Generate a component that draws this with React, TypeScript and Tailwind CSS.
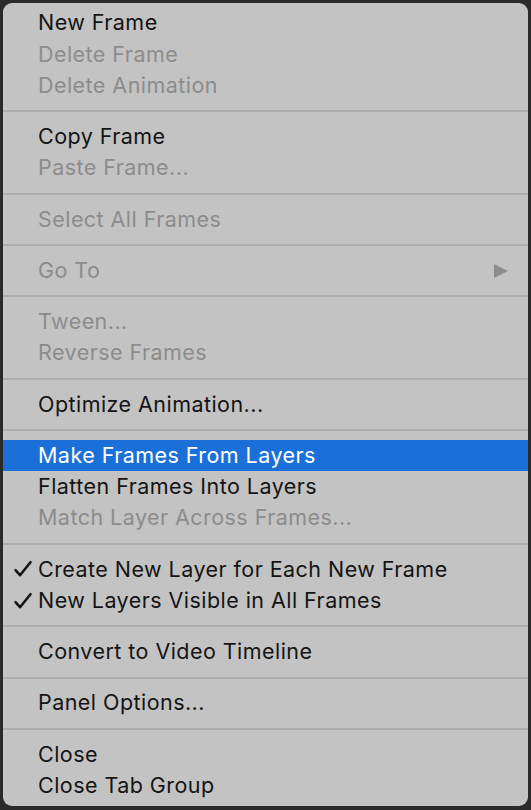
import React from "react";

type Item = { label: string; disabled?: boolean; checked?: boolean; highlighted?: boolean; submenu?: boolean };

const groups: Item[][] = [
  [{ label: "New Frame" }, { label: "Delete Frame", disabled: true }, { label: "Delete Animation", disabled: true }],
  [{ label: "Copy Frame" }, { label: "Paste Frame...", disabled: true }],
  [{ label: "Select All Frames", disabled: true }],
  [{ label: "Go To", disabled: true, submenu: true }],
  [{ label: "Tween...", disabled: true }, { label: "Reverse Frames", disabled: true }],
  [{ label: "Optimize Animation..." }],
  [
    { label: "Make Frames From Layers", highlighted: true },
    { label: "Flatten Frames Into Layers" },
    { label: "Match Layer Across Frames...", disabled: true },
  ],
  [
    { label: "Create New Layer for Each New Frame", checked: true },
    { label: "New Layers Visible in All Frames", checked: true },
  ],
  [{ label: "Convert to Video Timeline" }],
  [{ label: "Panel Options..." }],
  [{ label: "Close" }, { label: "Close Tab Group" }],
];

function Row({ item }: { item: Item }) {
  const color = item.highlighted ? "text-white" : item.disabled ? "text-[#8c8c8c]" : "text-[#141414]";
  return (
    <div
      className={`relative flex h-[31.25px] items-center pl-[35px] pr-[20px] ${item.highlighted ? "bg-[#1b6fd8]" : ""} ${color}`}
    >
      {item.checked && (
        <span className="absolute left-[10px] top-0 flex h-full items-center">
          <svg width="20" height="18" viewBox="0 0 20 18">
            <path d="M2.5 10.2 L7 15.2 L17.5 2.2" fill="none" stroke="#141414" strokeWidth="2.6" strokeLinecap="round" strokeLinejoin="round" />
          </svg>
        </span>
      )}
      <span className="flex-1 whitespace-nowrap text-[21.5px] leading-none tracking-[0.45px]">{item.label}</span>
      {item.submenu && (
        <svg width="14" height="14" viewBox="0 0 14 14">
          <path d="M0 0 L14 7 L0 14 Z" fill="#8c8c8c" />
        </svg>
      )}
    </div>
  );
}

export default function App() {
  return (
    <div className="h-[810px] w-[531px] bg-[#2a2a2a] p-[3px] pb-[4px]" style={{ fontFamily: "Inter, 'Noto Sans', sans-serif" }}>
      <div className="flex h-full flex-col overflow-hidden rounded-[9px] bg-[#c3c3c3] pt-[4.5px] pb-[4px]">
        {groups.map((g, gi) => (
          <React.Fragment key={gi}>
            {gi > 0 && (
              <div className="flex h-[20px] items-center">
                <div className="h-[2px] w-full bg-[#adadad]" />
              </div>
            )}
            {g.map((it) => (
              <Row key={it.label} item={it} />
            ))}
          </React.Fragment>
        ))}
      </div>
    </div>
  );
}
